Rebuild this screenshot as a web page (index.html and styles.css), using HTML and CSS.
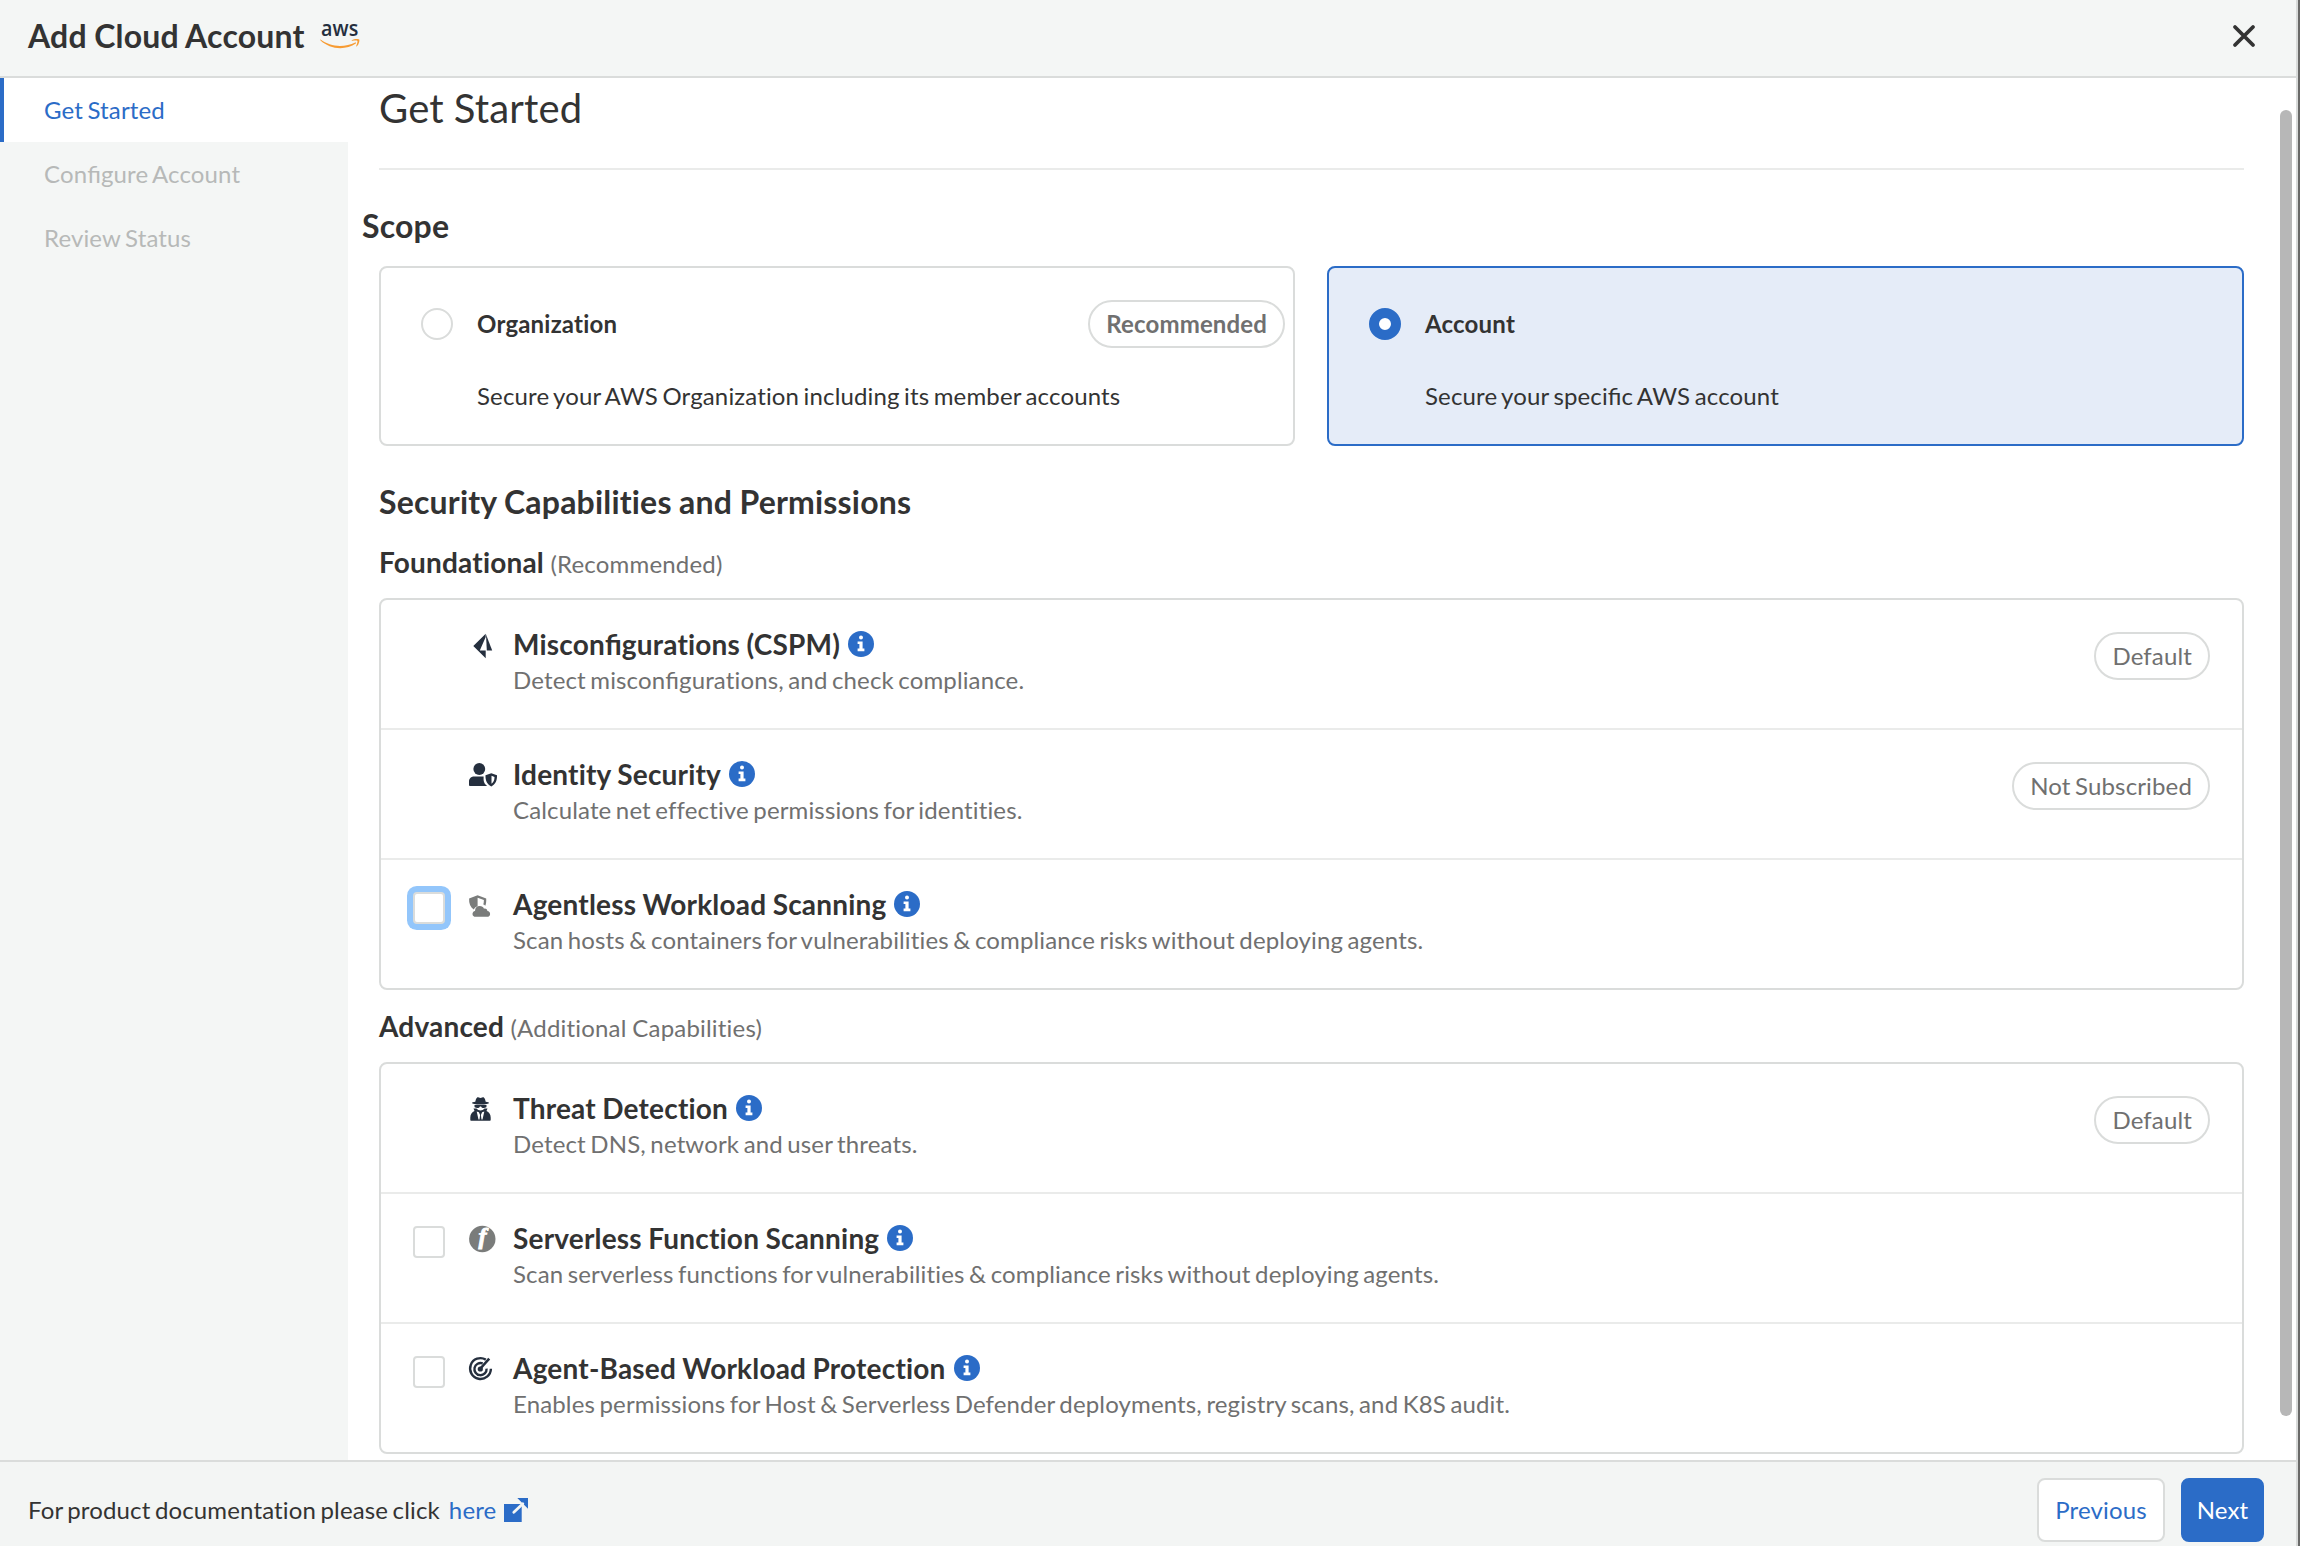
FILE: index.html
```
<!DOCTYPE html>
<html lang="en">
<head>
<meta charset="utf-8">
<title>Add Cloud Account</title>
<link rel="stylesheet" href="styles.css">
</head>
<body>
<svg class="defs" aria-hidden="true">
  <symbol id="info" viewBox="0 0 26 26">
    <circle cx="13" cy="13" r="13" fill="#2b6cc7"/>
    <circle cx="13" cy="6.600" r="2" fill="#fff"/>
    <path d="M9.600 10.400h5v7h1.800v2.800H9.600v-2.800h1.800v-4.400H9.600z" fill="#fff"/>
  </symbol>
</svg>
<div class="modal">
  <header class="header">
    <h1 class="header-title">Add Cloud Account</h1>
    <svg class="aws" viewBox="0 0 40 32" width="40" height="32">
      <text x="1" y="16" textLength="37.5" lengthAdjust="spacingAndGlyphs">aws</text>
      <g fill="#f79c34" transform="translate(0 2)">
        <path d="M.6 17.600C6 21.600 13 24 20 24c5.200 0 10.800-1.300 15.200-3.500.8-.3 1.300.5.6 1.100C31.700 24.600 25.700 26.200 20.300 26.200 12.800 26.200 6 23.400.8 18.800c-.6-.6-.7-1.200-.2-1.200z"/>
        <path d="M31.700 18.200c2.400-1.600 6.900-1.500 7.500-.8.6.8-.2 5-2.400 6.900-.5.4-.8.1-.6-.4.7-1.700 1.600-4.400 1.200-5-.5-.6-3.300-.3-4.800-.2-.9.100-1.300-.2-.9-.5z"/>
      </g>
    </svg>
    <svg class="close" viewBox="0 0 24 24" width="24" height="24"><path d="M3 3l18 18M21 3L3 21" stroke="#333" stroke-width="3.800" stroke-linecap="round"/></svg>
  </header>

  <div class="body">
    <nav class="sidebar">
      <a class="step active">Get Started</a>
      <a class="step">Con<span class="liga">fi</span>gure Account</a>
      <a class="step">Review Status</a>
    </nav>

    <main class="main">
      <h2 class="page-title">Get Started</h2>
      <h3 class="section scope">Scope</h3>
      <div class="cards">
        <div class="card">
          <span class="radio"></span>
          <div class="card-text">
            <div class="card-head"><strong>Organization</strong><span class="badge bold">Recommended</span></div>
            <p>Secure your AWS Organization including its member accounts</p>
          </div>
        </div>
        <div class="card selected">
          <span class="radio"></span>
          <div class="card-text">
            <div class="card-head"><strong>Account</strong></div>
            <p>Secure your speci<span class="liga">fi</span>c AWS account</p>
          </div>
        </div>
      </div>

      <h3 class="section security">Security Capabilities and Permissions</h3>

      <h4 class="group">Foundational <small>(Recommended)</small></h4>
      <div class="panel">
        <div class="row">
          <span class="check-slot"></span>
          <svg class="icon" viewBox="0 0 28 28"><path d="M4.300 16L16.700 3.700V7L10.800 20.600h5.900v7.700z"/><path d="M17 4.500l6.200 16.100H17.800z"/></svg>
          <div class="info-text">
            <h5><span>Miscon<span class="liga">fi</span>gurations (CSPM)</span><svg class="info"><use href="#info"/></svg></h5>
            <p>Detect miscon<span class="liga">fi</span>gurations, and check compliance.</p>
          </div>
          <span class="badge">Default</span>
        </div>
        <div class="row">
          <span class="check-slot"></span>
          <svg class="icon" viewBox="0 0 28 28"><circle cx="10.300" cy="9" r="5.900"/><path d="M5 16.400h9.600v3.600c.2 2.500 1.500 4.600 3.600 6H.9c-.6 0-.9-.3-.9-.9v-3.500c0-3 2-5.200 5-5.200z"/><path fill-rule="evenodd" d="M22.300 13.200l5.700 2.100c.2 5-1.400 9-5.700 11.200-4.300-2.200-6-6.200-5.800-11.200zM22.500 15.800v7.900c2-1.400 3-3.500 3-6.700z"/></svg>
          <div class="info-text">
            <h5>Identity Security<svg class="info"><use href="#info"/></svg></h5>
            <p>Calculate net effective permissions for identities.</p>
          </div>
          <span class="badge">Not Subscribed</span>
        </div>
        <div class="row">
          <span class="check-slot"><span class="checkbox focused"></span></span>
          <svg class="icon muted" viewBox="0 0 28 28"><path fill-rule="evenodd" d="M8.600 5.200L17.200 8.400c.2 3-.1 5.200-.9 7.300-.9-.7-1.400-1-2-1.100.4-1.500.6-3 .6-4.700L8.600 7.700v8.700c-2 .1-3 1.300-3.900 3.200C1.400 16.800-.2 13.500.1 8.400z"/><path d="M6.800 26.800c-2 0-3.300-1.200-3.300-2.900 0-1.600 1-2.700 2.500-3 .1-3 2.100-4.900 4.700-4.900 2.100 0 3.700 1 4.300 2.700 2-.4 3.300.7 3.400 2.400 1.700.2 2.700 1.300 2.700 2.800 0 1.700-1.200 2.900-3 2.900z"/></svg>
          <div class="info-text">
            <h5>Agentless Workload Scanning<svg class="info"><use href="#info"/></svg></h5>
            <p>Scan hosts &amp; containers for vulnerabilities &amp; compliance risks without deploying agents.</p>
          </div>
        </div>
      </div>

      <h4 class="group">Advanced <small>(Additional Capabilities)</small></h4>
      <div class="panel">
        <div class="row">
          <span class="check-slot"></span>
          <svg class="icon" viewBox="0 0 28 28"><path d="M8.200 3.400c.7-.3 2 .6 3.300.6s2.600-.9 3.300-.6c1 .4 1.700 2.900 1.900 4.400 2 .3 3.300.7 3.300 1.200 0 .9-3.500 1.500-8.500 1.500S3 9.900 3 9c0-.5 1.300-.9 3.300-1.200.2-1.500.9-4 1.900-4.400z"/><path d="M5.500 11h12v1.600c0 1-1.200 1.400-2.600 1.400-1.600 0-2.400-.7-2.800-1.600h-1.200c-.4.900-1.200 1.600-2.800 1.600-1.400 0-2.600-.4-2.600-1.400z"/><path fill-rule="evenodd" d="M4.500 14.400h3c1 1.200 2.500 2 4 2s3-.8 4-2h3l-1 2.600c2.500 1 4.200 3.400 4.200 6.500v2.200c0 .6-.4 1-1 1H2.300c-.6 0-1-.4-1-1v-2.200c0-3.100 1.700-5.500 4.200-6.500zM7.700 17.500l1.800 8h1l.6-4.500-1.200-2.700zM15.300 17.500l-2.200.8-1.200 2.700.6 4.500h1z"/></svg>
          <div class="info-text">
            <h5>Threat Detection<svg class="info"><use href="#info"/></svg></h5>
            <p>Detect DNS, network and user threats.</p>
          </div>
          <span class="badge">Default</span>
        </div>
        <div class="row">
          <span class="check-slot"><span class="checkbox"></span></span>
          <svg class="icon muted" viewBox="0 0 28 28"><circle cx="13.300" cy="15" r="13.200"/><text class="fn" x="9.600" y="20">f</text></svg>
          <div class="info-text">
            <h5>Serverless Function Scanning<svg class="info"><use href="#info"/></svg></h5>
            <p>Scan serverless functions for vulnerabilities &amp; compliance risks without deploying agents.</p>
          </div>
        </div>
        <div class="row">
          <span class="check-slot"><span class="checkbox"></span></span>
          <svg class="icon" viewBox="0 0 28 28"><g fill="none" stroke="#252f3e"><path stroke-width="2.400" d="M16.800 5.600A10.400 10.400 0 1 0 21.900 14.700"/><path stroke-width="2.400" d="M13.700 9.400A6.100 6.100 0 1 0 17.600 14.700"/><path stroke-width="2.600" d="M11 15L20.200 4.600"/></g><circle cx="11.300" cy="15" r="2.600"/></svg>
          <div class="info-text">
            <h5>Agent-Based Workload Protection<svg class="info"><use href="#info"/></svg></h5>
            <p>Enables permissions for Host &amp; Serverless Defender deployments, registry scans, and K8S audit.</p>
          </div>
        </div>
      </div>
      <div class="scroll-thumb"></div>
    </main>
  </div>

  <footer class="footer">
    <span>For product documentation please click</span>
    <a class="doc-link">here<svg viewBox="0 0 24 24" width="24" height="24"><path fill="#2b6cc7" d="M0 6h17.700v18H0zM13.300 0H24v10.700z"/><path d="M9.800 14.200l9-8.400" stroke="#f3f5f4" stroke-width="2.800" stroke-linecap="round"/></svg></a>
    <div class="actions">
      <button class="btn">Previous</button>
      <button class="btn primary">Next</button>
    </div>
  </footer>
</div>
</body>
</html>
```
FILE: styles.css
```
* { box-sizing: border-box; margin: 0; padding: 0; }

body {
  background: #696968;
  color: #333;
  font: 24px/36px "Lato", sans-serif;
  letter-spacing: .14px;
  word-spacing: -1.8px;
}
h1, h2, h3, h4, h5, strong { letter-spacing: .19px; word-spacing: -.6px; }

.defs { display: none; }
.liga { letter-spacing: 0; font-variant-ligatures: common-ligatures; }

.modal {
  display: flex;
  flex-direction: column;
  width: 2298px;
  height: 1546px;
  border-right: 2px solid #d8dad9;
  background: #fff;
}

/* Header */
.header {
  display: flex;
  align-items: center;
  height: 78px;
  padding: 0 40px 4px 28px;
  background: #f4f6f5;
  border-bottom: 2px solid #dadcdb;
}
.header-title { font-size: 32px; line-height: 40px; font-weight: 700; }
.aws { margin-left: 15px; overflow: visible; }
.aws text { font: 600 21px/1 "Open Sans", sans-serif; fill: #252f3e; }
.close { margin-left: auto; }

/* Body */
.body { display: flex; flex: 1; min-height: 0; }

.sidebar { width: 348px; background: #f4f6f5; }
.step {
  display: block;
  height: 64px;
  padding-left: 40px;
  border-left: 4px solid transparent;
  line-height: 64px;
  color: #b7b9b8;
}
.step.active { background: #fff; border-color: #2b6cc7; color: #2b6cc7; }

.main {
  position: relative;
  flex: 1;
  padding: 6px 52px 0 31px;
}
.page-title {
  height: 86px;
  border-bottom: 2px solid #eaebea;
  font-size: 40px;
  line-height: 48px;
  font-weight: 400;
}
.section { font-size: 32px; line-height: 40px; font-weight: 700; }
.scope { margin: 36px 0 20px -17px; }
.security { margin-top: 36px; }

/* Scope cards */
.cards { display: grid; grid-template-columns: 916px 917px; gap: 32px; }
.card {
  display: flex;
  height: 180px;
  padding: 32px 8px 0 40px;
  border: 2px solid #dadcdb;
  border-radius: 8px;
}
.card.selected { background: #e5ecf8; border-color: #2b6cc7; }
.radio {
  width: 32px;
  height: 32px;
  margin: 8px 24px 0 0;
  border: 2px solid #dadcdb;
  border-radius: 50%;
  background: #fff;
}
.selected .radio { border: 10px solid #2b6cc7; }
.card-text { flex: 1; }
.card-head {
  display: flex;
  align-items: center;
  justify-content: space-between;
  height: 48px;
  margin-bottom: 30px;
}

.badge {
  height: 48px;
  padding: 0 16px;
  border: 2px solid #dadcdb;
  border-radius: 24px;
  background: #fff;
  line-height: 44px;
  color: #707070;
}
.badge.bold { font-weight: 700; }

/* Capability panels */
.group {
  height: 34px;
  margin: 19px 0;
  font-size: 28px;
  line-height: 34px;
  font-weight: 700;
}
.security + .group { margin-top: 23px; }
.group small {
  font-size: 24px;
  line-height: 1;
  font-weight: 400;
  color: #707070;
}

.panel { border: 2px solid #dadcdb; border-radius: 8px; }
.row { display: flex; height: 130px; border-bottom: 2px solid #eaebea; }
.row:last-child { height: 128px; border-bottom: 0; }
.check-slot { width: 56px; margin: 32px 0 0 32px; }
.checkbox {
  display: block;
  width: 32px;
  height: 32px;
  border: 2px solid #dadcdb;
  border-radius: 4px;
  background: #fff;
}
.checkbox.focused { box-shadow: 0 0 0 6px #93c6fb; }
.icon {
  width: 28px;
  height: 28px;
  margin: 30px 16px 0 0;
  fill: #252f3e;
  overflow: visible;
}
.icon.muted { fill: #7a7c7b; }
.icon .fn {
  font: italic 700 24px "Liberation Serif", serif;
  fill: #fff;
  stroke: #fff;
  stroke-width: .9px;
}
.info-text { flex: 1; padding-top: 26px; }
.info-text h5 {
  display: flex;
  align-items: center;
  height: 36px;
  font-size: 28px;
  font-weight: 700;
}
.info-text p { color: #707070; }
.info { width: 26px; height: 26px; margin-left: 8px; }
.row .badge { margin: 32px 32px 0 0; }

.scroll-thumb {
  position: absolute;
  top: 32px;
  right: 4px;
  width: 12px;
  height: 1306px;
  border-radius: 6px;
  background: #b7b7b7;
}

/* Footer */
.footer {
  display: flex;
  align-items: center;
  height: 86px;
  padding: 12px 32px 0 28px;
  border-top: 2px solid #dadcdb;
  background: #f3f5f4;
}
.doc-link { display: flex; align-items: center; margin-left: 9px; color: #2b6cc7; }
.doc-link svg { margin-left: 8px; }
.actions { display: flex; gap: 16px; margin-left: auto; }
.btn {
  width: 128px;
  height: 64px;
  border: 2px solid #dadcdb;
  border-radius: 8px;
  background: #fff;
  font: inherit;
  letter-spacing: inherit;
  color: #2b6cc7;
}
.btn.primary { width: 83px; background: #2b6cc7; border-color: #2b6cc7; color: #fff; }
```
